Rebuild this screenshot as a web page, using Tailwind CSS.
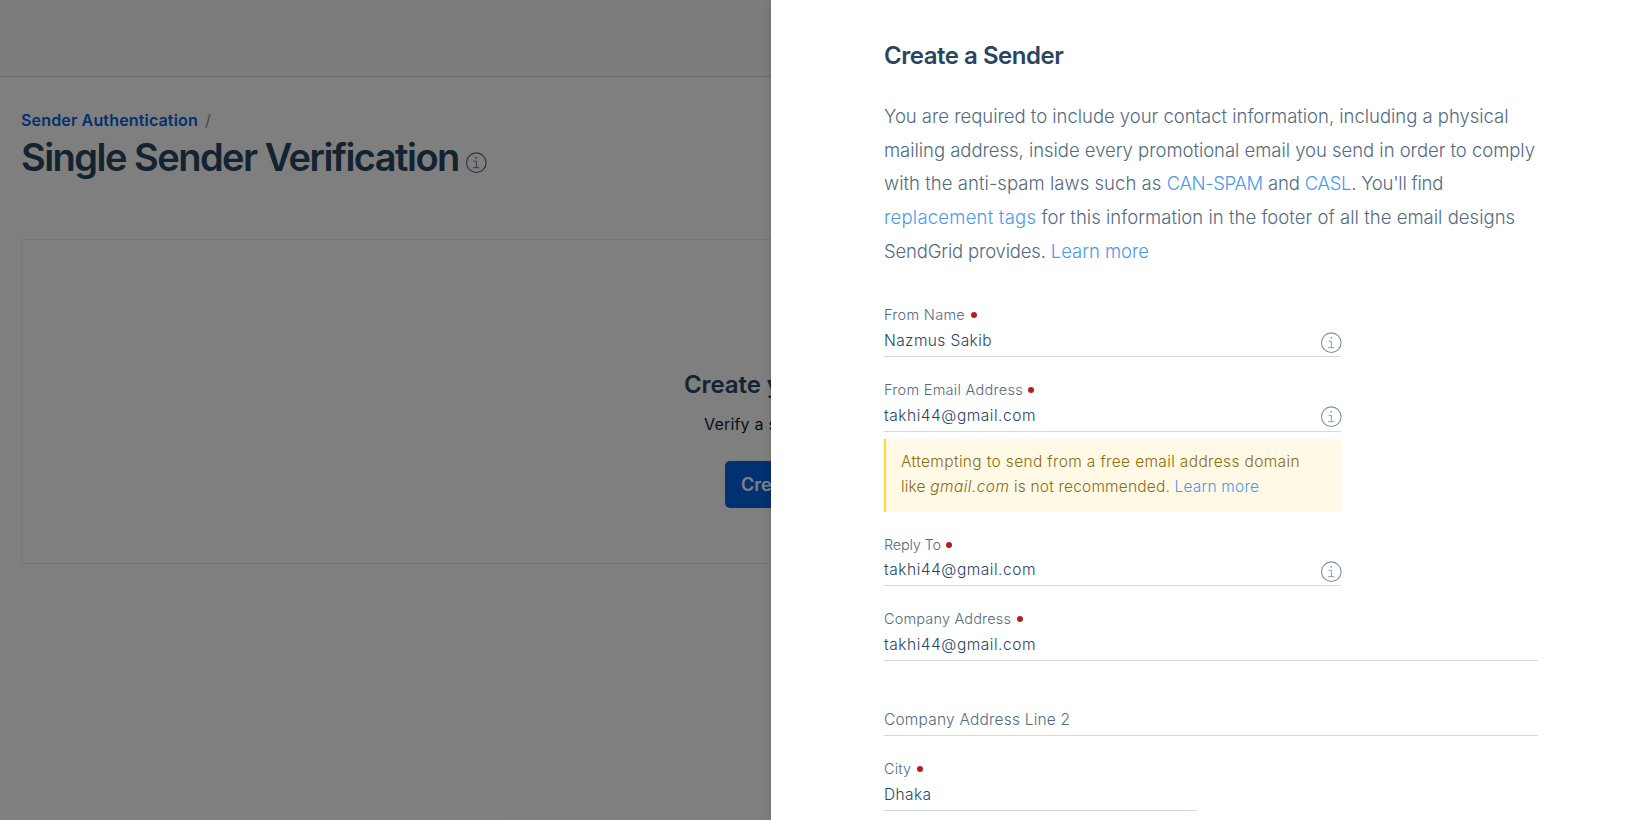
<!DOCTYPE html>
<html lang="en">
<head>
<meta charset="utf-8">
<title>Single Sender Verification</title>
<script src="https://cdn.jsdelivr.net/npm/@tailwindcss/browser@4"></script>
</head>
<body class="h-[820px] w-[1633px] overflow-hidden bg-white font-['Inter',sans-serif]">
<svg class="hidden">
  <symbol id="info" viewBox="0 0 22 22">
    <circle cx="11.3" cy="10.7" r="9.8" fill="none" stroke="currentColor" stroke-width="1.1"/>
    <path d="M8.6 9.3H11.4V15.5M8.1 15.7H14.3" fill="none" stroke="currentColor" stroke-width="0.9"/>
    <path d="M10.5 4.9h1.5v1.5h-1.5z" fill="currentColor"/>
  </symbol>
</svg>
<div class="flex h-full">
  <div class="relative h-full w-[771px] shrink-0 overflow-hidden">
    <header class="h-[77px] border-b border-[#d5d8e4] bg-[#f9f9fa]"></header>
    <main class="pl-[21px] pt-[31px]">
      <nav class="flex h-6 items-center text-base">
        <a class="font-semibold tracking-[0.16px] text-[#0263e0]">Sender Authentication</a>
        <span class="ml-[7px] text-[#8891aa]">/</span>
      </nav>
      <div class="mt-[3px] flex h-11 items-start">
        <h1 class="whitespace-nowrap text-[38px] font-semibold leading-[44px] tracking-[-1.52px] text-[#294661]">Single Sender Verification</h1>
        <svg class="ml-[6.5px] mt-[17px] size-[22px] text-[#546b81]"><use href="#info"/></svg>
      </div>
      <section class="mt-[60px] h-[325px] w-[1591px] rounded-xs border border-[#e9eaec] pt-[129px]">
        <h2 class="whitespace-nowrap pl-[662px] text-2xl leading-8 font-semibold tracking-[-0.1px] text-[#294661]">Create y</h2>
        <p class="mt-[11px] whitespace-nowrap pl-[682px] text-base leading-6 tracking-[0.2px] text-[#121c2d]">Verify a s</p>
        <button class="ml-[703px] mt-[25px] flex h-[47px] w-[184px] items-center rounded-[5px] bg-[#0263e0] pl-[16px] text-[18px] font-semibold text-white">Cre</button>
      </section>
    </main>
    <div class="absolute inset-0 bg-black/50"></div>
  </div>
  <aside class="relative h-full grow bg-white pl-[113px] pt-[40px] shadow-[0_0_8px_rgba(0,0,0,0.15)]">
    <h2 class="text-[24px] font-semibold leading-8 tracking-[-0.48px] text-[#294661]">Create a Sender</h2>
    <p class="mt-[28px] whitespace-nowrap text-[18.5px] font-light leading-[33.67px] text-[#546b81]">
      <span class="block tracking-[-0.025px]">You are required to include your contact information, including a physical</span>
      <span class="block tracking-[-0.035px]">mailing address, inside every promotional email you send in order to comply</span>
      <span class="block tracking-[0.05px]">with the anti-spam laws such as <a class="tracking-[-0.37px] text-[#4b9aea]">CAN-SPAM</a><span class="tracking-[-0.15px]"> and </span><a class="tracking-[-0.3px] text-[#4b9aea]">CASL</a><span class="tracking-[-0.25px]">. You'll find</span></span>
      <span class="block tracking-[0.03px]"><a class="tracking-[0.22px] text-[#4b9aea]">replacement tags</a> for this information in the footer of all the email designs</span>
      <span class="block tracking-[-0.18px]">SendGrid provides. <a class="tracking-[-0.05px] text-[#4b9aea]">Learn more</a></span>
    </p>

    <form class="mt-[14px] text-[15.5px] font-light text-[#294661]">
      <div class="h-[75px] w-[457px] border-b border-[#d5d8de] pt-[23px]">
        <label class="flex h-5 items-center text-[14.5px] tracking-[0.3px] text-[#546b81]">From Name<i class="ml-[5.5px] size-[6px] shrink-0 rounded-full bg-[#b71c1c]"></i></label>
        <div class="mt-[4px] flex h-6 items-start justify-between leading-6"><span class="tracking-[0.4px]">Nazmus Sakib</span><svg class="-mr-px mt-[3px] size-[22px] text-[#8092a5]"><use href="#info"/></svg></div>
      </div>
      <div class="h-[75px] w-[457px] border-b border-[#d5d8de] pt-[23px]">
        <label class="flex h-5 items-center text-[14.5px] tracking-[0.28px] text-[#546b81]">From Email Address<i class="ml-[5.5px] size-[6px] shrink-0 rounded-full bg-[#b71c1c]"></i></label>
        <div class="mt-[4px] flex h-6 items-start justify-between leading-6"><span class="tracking-[0.52px]">takhi44@gmail.com</span><svg class="-mr-px mt-[2px] size-[22px] text-[#8092a5]"><use href="#info"/></svg></div>
      </div>
      <div class="mt-[7px] h-[73px] w-[457px] whitespace-nowrap border-l-2 border-[#fdd835] bg-[#fff9e5] pl-[15px] pt-[10px] leading-[25px] tracking-[0.35px] text-[#8c6d10]">
        <span class="block">Attempting to send from a free email address domain</span>
        <span class="block"><span class="tracking-[0.15px]">like </span><em class="tracking-[0.45px]">gmail.com</em><span class="tracking-[0.18px]"> is not recommended. </span><a class="tracking-[0.2px] text-[#4b9aea]">Learn more</a></span>
      </div>
      <div class="h-[74px] w-[457px] border-b border-[#d5d8de] pt-[23px]">
        <label class="flex h-5 items-center text-[14.5px] tracking-[-0.2px] text-[#546b81]">Reply To<i class="ml-[5.5px] size-[6px] shrink-0 rounded-full bg-[#b71c1c]"></i></label>
        <div class="mt-[3px] flex h-6 items-start justify-between leading-6"><span class="tracking-[0.52px]">takhi44@gmail.com</span><svg class="-mr-px mt-[3px] size-[22px] text-[#8092a5]"><use href="#info"/></svg></div>
      </div>
      <div class="h-[75px] w-[654px] border-b border-[#d5d8de] pt-[23px]">
        <label class="flex h-5 items-center text-[14.5px] tracking-[0.17px] text-[#546b81]">Company Address<i class="ml-[5.5px] size-[6px] shrink-0 rounded-full bg-[#b71c1c]"></i></label>
        <div class="mt-[4px] h-6 leading-6 tracking-[0.52px]">takhi44@gmail.com</div>
      </div>
      <div class="h-[75px] w-[654px] border-b border-[#d5d8de] pt-[47px]">
        <div class="h-6 leading-6 tracking-[0.2px] text-[#546b81]">Company Address Line 2</div>
      </div>
      <div class="h-[75px] w-[313px] border-b border-[#d5d8de] pt-[23px]">
        <label class="flex h-5 items-center text-[14.5px] tracking-[0.15px] text-[#546b81]">City<i class="ml-[5.5px] size-[6px] shrink-0 rounded-full bg-[#b71c1c]"></i></label>
        <div class="mt-[4px] h-6 leading-6 tracking-[0.37px]">Dhaka</div>
      </div>
    </form>
  </aside>
</div>
</body>
</html>
